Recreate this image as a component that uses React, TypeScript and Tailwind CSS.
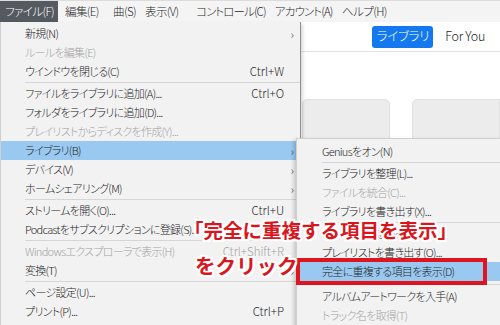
type Row =
  | { kind: "sep"; h?: string }
  | { kind: "item"; label: string; shortcut?: string; sub?: boolean; disabled?: boolean; active?: boolean };

const mainRows: Row[] = [
  { kind: "item", label: "新規(N)", sub: true },
  { kind: "item", label: "ルールを編集(E)", disabled: true },
  { kind: "item", label: "ウインドウを閉じる(C)", shortcut: "Ctrl+W" },
  { kind: "sep" },
  { kind: "item", label: "ファイルをライブラリに追加(A)...", shortcut: "Ctrl+O" },
  { kind: "item", label: "フォルダをライブラリに追加(D)..." },
  { kind: "item", label: "プレイリストからディスクを作成(Y)...", disabled: true },
  { kind: "item", label: "ライブラリ(B)", sub: true, active: true },
  { kind: "item", label: "デバイス(V)", sub: true },
  { kind: "item", label: "ホームシェアリング(M)", sub: true },
  { kind: "sep" },
  { kind: "item", label: "ストリームを開く(O)...", shortcut: "Ctrl+U" },
  { kind: "item", label: "Podcastをサブスクリプションに登録(S)..." },
  { kind: "sep" },
  { kind: "item", label: "Windowsエクスプローラで表示(H)", shortcut: "Ctrl+Shift+R", disabled: true },
  { kind: "item", label: "変換(T)", sub: true },
  { kind: "sep" },
  { kind: "item", label: "ページ設定(U)..." },
  { kind: "item", label: "プリント(P)...", shortcut: "Ctrl+P" },
];

const libraryRows: Row[] = [
  { kind: "item", label: "Geniusをオン(N)" },
  { kind: "sep" },
  { kind: "item", label: "ライブラリを整理(L)..." },
  { kind: "item", label: "ファイルを統合(C)...", disabled: true },
  { kind: "item", label: "ライブラリを書き出す(X)..." },
  { kind: "sep" },
  { kind: "item", label: "プレイリストを読み込む(I)..." },
  { kind: "item", label: "プレイリストを書き出す(O)..." },
  { kind: "item", label: "完全に重複する項目を表示(D)", active: true },
  { kind: "sep", h: "h-[6px]" },
  { kind: "item", label: "アルバムアートワークを入手(A)" },
  { kind: "item", label: "トラック名を取得(T)", disabled: true },
];

// label + item box classes, so each title starts where the reference has it
const menuBar: [string, string][] = [
  ["ファイル(F)", "w-[58px] pl-[5px] bg-[#545a60] text-white"],
  ["編集(E)", "w-[50px] pl-[7px]"],
  ["曲(S)", "w-[32px] pl-[5px]"],
  ["表示(V)", "w-[51px] pl-[5px]"],
  ["コントロール(C)", "w-[79px] pl-[5px] tracking-[-0.9px]"],
  ["アカウント(A)", "w-[67px] pl-[5px] tracking-[-0.9px]"],
  ["ヘルプ(H)", "pl-[5px]"],
];

const outline =
  "[text-shadow:2px_0_0_#fff,-2px_0_0_#fff,0_2px_0_#fff,0_-2px_0_#fff,2px_2px_0_#fff,-2px_-2px_0_#fff,2px_-2px_0_#fff,-2px_2px_0_#fff]";

function MenuRows({ rows, indent }: { rows: Row[]; indent: string }) {
  return (
    <>
      {rows.map((r, i) =>
        r.kind === "sep" ? (
          <div key={`s-${i}`} className={`${r.h ?? "h-[3px]"} flex items-center ${indent}`}>
            <div className="h-px w-full bg-[#d6d6d6]" />
          </div>
        ) : (
          <div
            key={r.label}
            className={`h-[19px] flex items-center ${indent} ${r.active ? "bg-[#99c9f0]" : ""} ${
              r.disabled ? "text-[#a3a3a3]" : "text-[#262626]"
            }`}
          >
            <span className="flex-1 whitespace-nowrap">{r.label}</span>
            {r.shortcut && <span className="whitespace-nowrap tracking-normal text-[11.5px]">{r.shortcut}</span>}
            <span className="w-[16px] text-center text-[12px] leading-none text-[#555]">{r.sub ? "›" : ""}</span>
          </div>
        ),
      )}
    </>
  );
}

export default function App() {
  return (
    <div className="relative w-[500px] h-[325px] overflow-hidden bg-white text-[11px] tracking-[-0.7px] font-light [font-family:'Noto_Sans_CJK_JP','Noto_Sans',sans-serif] [font-feature-settings:'palt']">
      {/* menu bar */}
      <div className="h-[22px] flex items-stretch bg-[#f4f4f4] border-t border-[#dcdcdc] text-[#2a2a2a] text-[11.5px] tracking-[-0.6px]">
        {menuBar.map(([m, cls]) => (
          <div key={m} className={`flex items-center whitespace-nowrap ${cls}`}>
            {m}
          </div>
        ))}
      </div>

      {/* window content */}
      <div className="h-[30px] flex items-center justify-end gap-[12px] pr-[15px] border-b border-[#e3e3e3] tracking-normal">
        <div className="w-[61px] h-[22px] flex items-center justify-center rounded-[3px] bg-[#1479ee] text-white text-[12.5px] tracking-[-0.3px]">
          ライブラリ
        </div>
        <div className="text-[#222] text-[12.5px] tracking-[-0.3px]">For You</div>
      </div>
      <div className="flex justify-end gap-[22px] pt-[47px]">
        <div className="w-[88px] h-[40px] rounded-t-[5px] bg-[#ececec] border border-[#e0e0e0]" />
        <div className="w-[88px] h-[40px] rounded-tl-[5px] bg-[#ececec] border border-[#e0e0e0]" />
      </div>

      {/* File menu */}
      <div className="absolute left-0 top-[22px] w-[301px] h-[310px] pt-[2px] bg-[#f2f2f2] border-l border-[#cfcfcf] border-r border-r-[#8f8f8f] shadow-[2px_2px_3px_rgba(0,0,0,0.15)]">
        <MenuRows rows={mainRows} indent="pl-[24px]" />
      </div>

      {/* Library submenu */}
      <div className="absolute left-[296px] top-[138px] w-[210px] h-[200px] pt-[3px] bg-[#f2f2f2] border border-[#cfcfcf] shadow-[-2px_2px_4px_rgba(0,0,0,0.2)]">
        <MenuRows rows={libraryRows} indent="pl-[25px]" />
      </div>

      {/* red highlight box */}
      <div className="absolute left-[296px] top-[258px] w-[191px] h-[27px] border-[4px] border-[#e0141e]" />

      {/* annotation */}
      <div
        className={`absolute left-[184px] top-[217px] text-[19.5px] leading-[26px] font-bold tracking-normal text-[#d8161e] whitespace-nowrap [font-feature-settings:normal] ${outline}`}
      >
        「完全に重複する項目を表示」
      </div>
      <div
        className={`absolute left-[195px] top-[251px] text-[20.5px] leading-[28px] font-bold tracking-normal text-[#d8161e] whitespace-nowrap [font-feature-settings:normal] ${outline}`}
      >
        をクリック
      </div>
    </div>
  );
}
